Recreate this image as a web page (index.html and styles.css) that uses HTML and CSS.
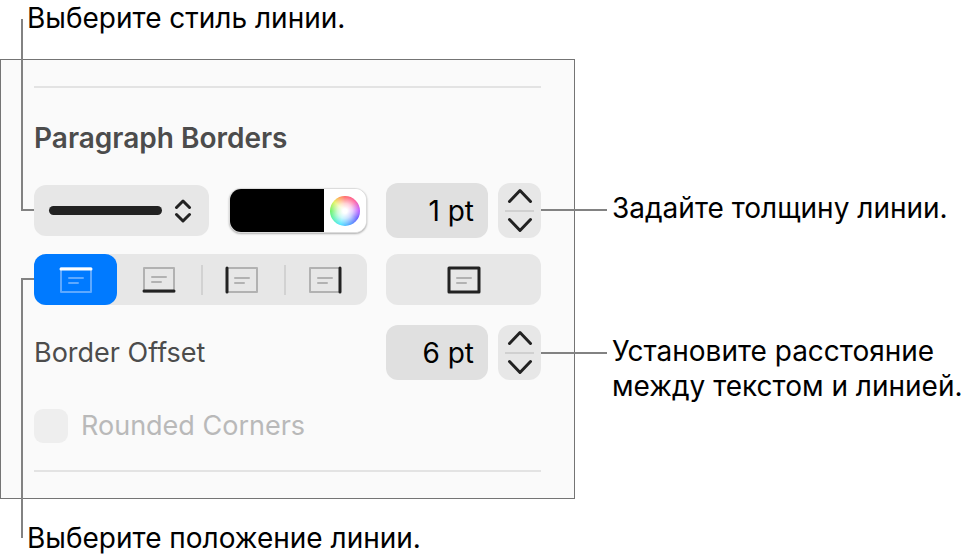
FILE: index.html
```html
<!DOCTYPE html>
<html lang="ru">
<head>
    <meta charset="UTF-8">
    <meta name="viewport" content="width=device-width, initial-scale=1.0">
    <title>Paragraph Borders</title>
    <link rel="stylesheet" href="styles.css">
</head>
<body>
    <main class="figure">
        <p class="caption caption-top">Выберите стиль линии.</p>

        <section class="panel" lang="en">
            <hr class="rule">
            <h2 class="title">Paragraph Borders</h2>

            <div class="row row-line">
                <div class="left">
                    <div class="style-picker">
                        <select class="style-select" aria-label="Line style">
                            <option value="solid" label=" "></option>
                        </select>
                        <span class="style-line"></span>
                        <svg class="style-arrows" width="18" height="24" viewBox="0 0 18 24">
                            <path d="M2.5 8.5 9 2l6.500 6.500M2.500 15.500 9 22l6.500-6.500"/>
                        </svg>
                    </div>
                    <div class="color-well">
                        <input class="swatch" type="color" value="#000000" aria-label="Line color">
                        <button class="wheel-button" type="button" aria-label="Color wheel"><span class="wheel"></span></button>
                    </div>
                </div>
                <div class="right">
                    <input class="field" type="text" value="1 pt" aria-label="Line width">
                    <div class="stepper">
                        <button class="step" type="button" aria-label="Increase width">
                            <svg width="26" height="16" viewBox="0 0 26 16"><path d="M2.500 13.500 13 2.500l10.500 11"/></svg>
                        </button>
                        <button class="step" type="button" aria-label="Decrease width">
                            <svg width="26" height="16" viewBox="0 0 26 16"><path d="M2.500 2.500 13 13.500l10.500-11"/></svg>
                        </button>
                    </div>
                </div>
            </div>

            <div class="row row-position">
                <div class="segments">
                    <button class="segment active" type="button" aria-label="Top" aria-pressed="true">
                        <svg width="34" height="28" viewBox="0 0 34 28">
                            <path class="frame" d="M2 2h30v24H2z"/>
                            <path class="lines" d="M10 12h14M10 17h9"/>
                            <path class="edge" d="M2 3h30"/>
                        </svg>
                    </button>
                    <button class="segment" type="button" aria-label="Bottom" aria-pressed="false">
                        <svg width="34" height="28" viewBox="0 0 34 28">
                            <path class="frame" d="M2 2h30v24H2z"/>
                            <path class="lines" d="M10 11h14M10 16h9"/>
                            <path class="edge" d="M2 25h30"/>
                        </svg>
                    </button>
                    <button class="segment split" type="button" aria-label="Left" aria-pressed="false">
                        <svg width="34" height="28" viewBox="0 0 34 28">
                            <path class="frame" d="M2 2h30v24H2z"/>
                            <path class="lines" d="M10 12h14M10 17h9"/>
                            <path class="edge" d="M2 2v24"/>
                        </svg>
                    </button>
                    <button class="segment split" type="button" aria-label="Right" aria-pressed="false">
                        <svg width="34" height="28" viewBox="0 0 34 28">
                            <path class="frame" d="M2 2h30v24H2z"/>
                            <path class="lines" d="M10 12h14M10 17h9"/>
                            <path class="edge" d="M32 2v24"/>
                        </svg>
                    </button>
                </div>
                <button class="all-sides" type="button" aria-label="All sides">
                    <svg width="34" height="28" viewBox="0 0 34 28">
                        <path class="edge" d="M2 2h30v24H2z"/>
                        <path class="lines" d="M10 12h14M10 17h9"/>
                    </svg>
                </button>
            </div>

            <div class="row row-offset">
                <label class="label" for="offset">Border Offset</label>
                <div class="right">
                    <input class="field" type="text" id="offset" value="6 pt">
                    <div class="stepper">
                        <button class="step" type="button" aria-label="Increase offset">
                            <svg width="26" height="16" viewBox="0 0 26 16"><path d="M2.500 13.500 13 2.500l10.500 11"/></svg>
                        </button>
                        <button class="step" type="button" aria-label="Decrease offset">
                            <svg width="26" height="16" viewBox="0 0 26 16"><path d="M2.500 2.500 13 13.500l10.500-11"/></svg>
                        </button>
                    </div>
                </div>
            </div>

            <div class="row-check">
                <input class="checkbox" type="checkbox" id="rounded" disabled>
                <label class="check-label" for="rounded">Rounded Corners</label>
            </div>
            <hr class="rule">
        </section>

        <div class="notes">
            <p class="note">Задайте толщину линии.</p>
            <p class="note">Установите расстояние между текстом и линией.</p>
        </div>

        <p class="caption caption-bottom">Выберите положение линии.</p>
    </main>
</body>
</html>
```
FILE: styles.css
```css
*, *::before {
    box-sizing: border-box;
}
body {
    margin: 0;
    background: #fff;
    color: #000;
    font-family: Inter, "Noto Sans", sans-serif;
    font-size: 28px;
    line-height: 35px;
}
p, h2 {
    margin: 0;
}
button, input, select {
    margin: 0;
    padding: 0;
    border: none;
    font: inherit;
    appearance: none;
}
svg {
    display: block;
    fill: none;
    stroke: #222;
    stroke-linecap: round;
    stroke-linejoin: round;
}
.figure {
    display: grid;
    grid-template-columns: minmax(0, 575px) minmax(0, 1fr);
    column-gap: 37px;
    padding-top: 1px;
}
.caption {
    position: relative;
    grid-column: 1 / -1;
    padding-left: 27px;
}
.caption-top {
    margin-bottom: 23px;
}
.caption-bottom {
    margin-top: 22px;
}

/* leader lines */
.caption::before, .note::before {
    content: "";
    position: absolute;
    border: 0 solid #828282;
}
.caption::before {
    left: 21px;
    width: 13px;
    border-left-width: 2px;
    z-index: 1;
}
.caption-top::before {
    top: 18px;
    height: 192px;
    border-bottom-width: 2px;
}
.caption-bottom::before {
    bottom: 18px;
    height: 260px;
    border-top-width: 2px;
}
.note::before {
    top: 18px;
    left: -71px;
    width: 66px;
    border-top-width: 2px;
}

.notes {
    display: flex;
    flex-direction: column;
    gap: 108px;
    padding-top: 132px;
}
.note {
    position: relative;
}

.panel {
    padding: 26px 33px;
    border: 1px solid #747474;
    background: #fafafa;
}
.rule {
    height: 2px;
    margin: 0;
    border: none;
    background: #e3e3e3;
}
.title {
    margin: 33px 0 27px;
    color: #4c4c4c;
    font-size: 28px;
    font-weight: 600;
}
.row {
    display: grid;
    grid-template-columns: minmax(0, 1fr) 155px;
    align-items: center;
    gap: 19px;
}
.left, .right {
    display: flex;
    align-items: center;
}
.left {
    gap: 20px;
}
.right {
    gap: 10px;
}
.style-picker {
    position: relative;
    display: flex;
    flex: 1;
    align-items: center;
    gap: 12px;
    height: 51px;
    padding: 0 17px 0 15px;
    border-radius: 12px;
    background: #e7e7e7;
}
.style-select {
    position: absolute;
    inset: 0;
    width: 100%;
    background: transparent;
}
.style-line {
    flex: 1;
    height: 9px;
    border-radius: 5px;
    background: #222;
}
.style-arrows {
    stroke-width: 3px;
}
.color-well {
    display: flex;
    flex: none;
    width: 138px;
    height: 45px;
    overflow: hidden;
    border: 1px solid #dcdcdc;
    border-radius: 12px;
    background: #fff;
    box-shadow: 0 1px 2px rgba(0, 0, 0, 0.3);
}
.swatch {
    flex: 1;
    min-width: 0;
    height: 100%;
    background: #000;
}
.swatch::-webkit-color-swatch-wrapper {
    padding: 0;
}
.swatch::-webkit-color-swatch {
    border: none;
}
.wheel-button {
    display: grid;
    place-items: center;
    width: 42px;
    background: #fff;
}
.wheel {
    width: 30px;
    height: 30px;
    border-radius: 50%;
    background:
        radial-gradient(circle closest-side, #fff 15%, rgba(255, 255, 255, 0.75) 50%, rgba(255, 255, 255, 0.15) 100%),
        conic-gradient(#ff4b4b, #ff3c8c 45deg, #b43cff 85deg, #4b3cff 120deg, #2d8cff 160deg, #2de1ff 200deg, #37f0a0 235deg, #4bf046 270deg, #dcf03c 310deg, #ff9b37 335deg, #ff4b4b);
}
.field {
    flex: 1;
    min-width: 0;
    height: 55px;
    padding-right: 14px;
    border-radius: 12px;
    background: #e0e0e0;
    color: #000;
    font-size: 28px;
    text-align: right;
}
.stepper {
    display: flex;
    flex-direction: column;
    width: 43px;
    height: 55px;
    padding: 0 7px;
    border-radius: 12px;
    background: #e7e7e7;
}
.step {
    display: grid;
    flex: 1;
    place-items: center;
    background: transparent;
    stroke-width: 3px;
}
.step + .step {
    border-top: 2px solid #d0d0d0;
}
.row-position {
    margin-top: 16px;
}
.segments {
    display: grid;
    grid-template-columns: repeat(4, 1fr);
    height: 51px;
    border-radius: 12px;
    background: #e7e7e7;
}
.segment, .all-sides {
    display: grid;
    place-items: center;
    border-radius: 12px;
    background: transparent;
}
.segment {
    position: relative;
}
.split::before {
    content: "";
    position: absolute;
    top: 11px;
    bottom: 10px;
    left: 0;
    width: 2px;
    background: #d2d2d2;
}
.all-sides {
    height: 51px;
    background: #e7e7e7;
}
.frame, .lines {
    stroke: #b2b2b2;
    stroke-width: 2px;
}
.edge {
    stroke-width: 3px;
}
.active {
    background: #007aff;
}
.active .frame, .active .lines {
    stroke: #5ea9ff;
}
.active .edge {
    stroke: #fff;
}
.row-offset {
    margin-top: 20px;
}
.label {
    color: #4c4c4c;
    font-size: 27px;
}
.row-check {
    display: flex;
    align-items: center;
    gap: 13px;
    margin: 28px 0 27px;
}
.checkbox {
    width: 34px;
    height: 34px;
    border-radius: 9px;
    background: #eee;
}
.check-label {
    color: #b9b9b9;
    font-size: 27px;
}
```
